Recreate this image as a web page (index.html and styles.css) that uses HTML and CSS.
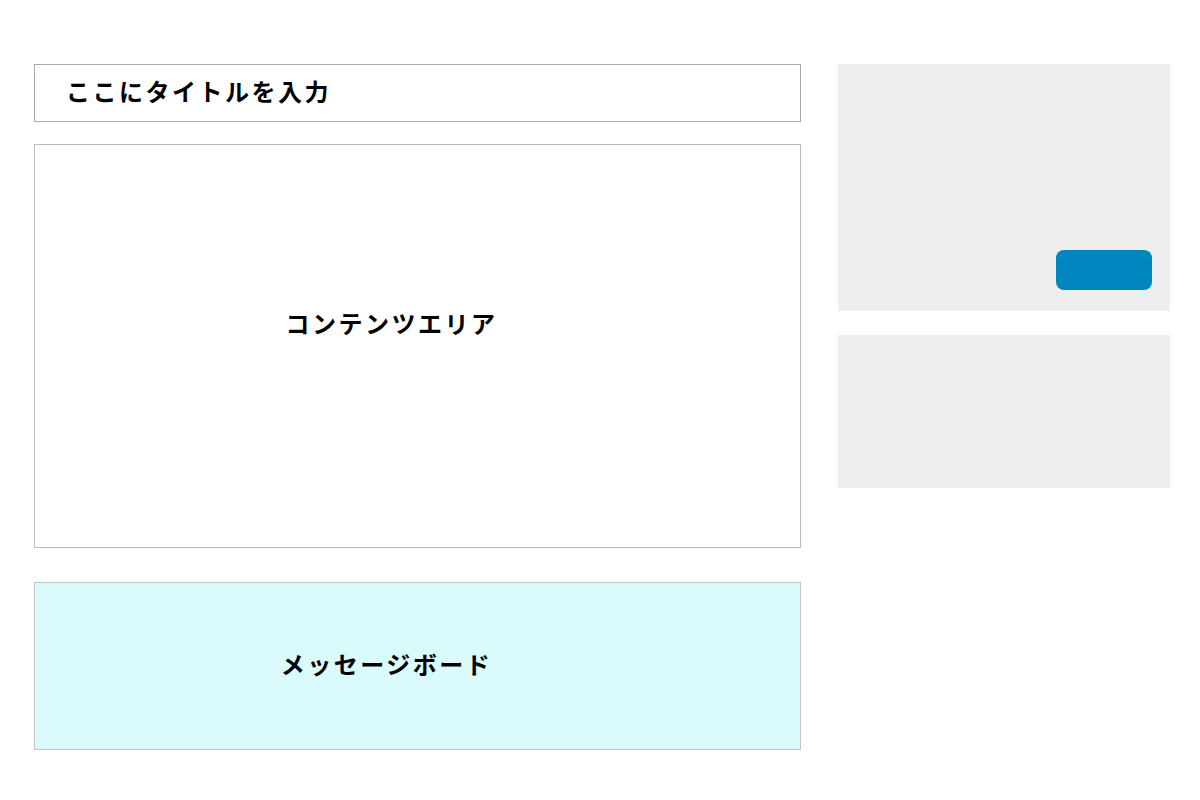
FILE: index.html
```html
<!DOCTYPE html>
<html lang="ja">
<head>
<meta charset="utf-8">
<link rel="stylesheet" href="styles.css">
</head>
<body>
<div class="page">
  <main class="main">
    <div class="title-box"><h1 class="title">ここにタイトルを入力</h1></div>
    <div class="content-area"><span class="label">コンテンツエリア</span></div>
    <div class="message-board"><span class="label">メッセージボード</span></div>
  </main>
  <aside class="side">
    <div class="side-box side-top"><div class="side-btn"></div></div>
    <div class="side-box side-bottom"></div>
  </aside>
</div>
</body>
</html>
```
FILE: styles.css
```css
html, body { margin: 0; padding: 0; background: #fff; }
body { font-family: "Noto Sans CJK JP", "Noto Sans", sans-serif; color: #000; }
.page {
  display: flex;
  gap: 37px;
  padding: 64px 30px 0 34px;
}
.main { width: 767px; display: flex; flex-direction: column; }
.title-box {
  box-sizing: border-box;
  height: 58px;
  border: 1px solid #aaa;
  display: flex;
  align-items: center;
  padding: 0 0 4px 31px;
}
.title { margin: 0; font-size: 24px; font-weight: 700; letter-spacing: 2.5px; line-height: 1; }
.content-area {
  box-sizing: border-box;
  margin-top: 22px;
  height: 404px;
  border: 1px solid #bbb;
  display: flex;
  justify-content: center;
  padding: 166px 52px 0 0;
}
.label { font-size: 24px; font-weight: 700; letter-spacing: 2.5px; line-height: 1; }
.message-board {
  box-sizing: border-box;
  margin-top: 34px;
  height: 168px;
  background: #dafafb;
  border: 1px solid #c4c4c4;
  display: flex;
  align-items: center;
  justify-content: center;
  padding: 0 62px 4px 0;
}
.side { width: 332px; display: flex; flex-direction: column; gap: 24px; }
.side-box { background: #eee; }
.side-top {
  height: 247px;
  display: flex;
  justify-content: flex-end;
  align-items: flex-end;
  padding: 0 18px 21px 0;
  box-sizing: border-box;
}
.side-btn { width: 96px; height: 40px; background: #0086bf; border-radius: 8px; }
.side-bottom { height: 153px; }
```
